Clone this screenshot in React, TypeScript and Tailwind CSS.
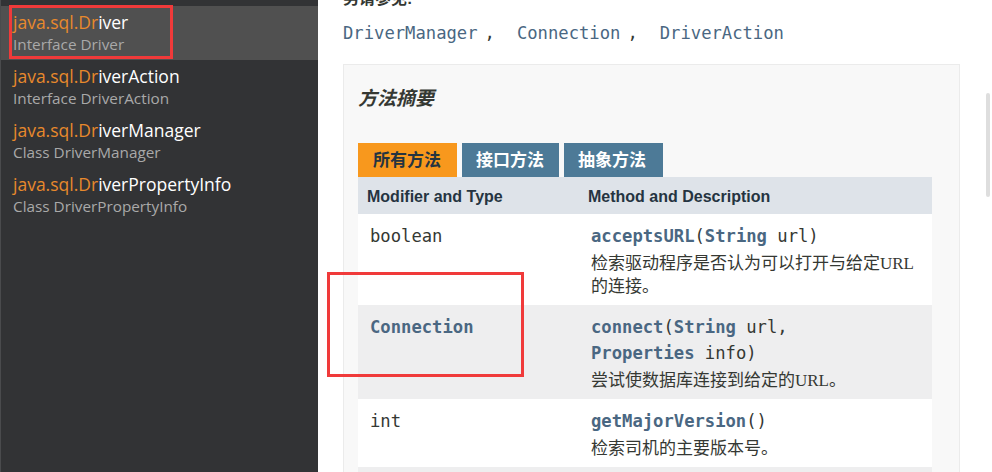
import React from 'react';

interface NavItem {
  name: string;
  kind: string;
  selected?: boolean;
}

const items: NavItem[] = [
  { name: 'Driver', kind: 'Interface Driver', selected: true },
  { name: 'DriverAction', kind: 'Interface DriverAction' },
  { name: 'DriverManager', kind: 'Class DriverManager' },
  { name: 'DriverPropertyInfo', kind: 'Class DriverPropertyInfo' },
];

const mono = "font-['DejaVu_Sans_Mono','Liberation_Mono',monospace]";
const cjk = "font-['Liberation_Serif','Noto_Sans_CJK_SC',serif]";

function Sidebar() {
  return (
    <div className="relative w-[318px] h-[472px] shrink-0 bg-[#323335] border-l border-[#4a4b4d] pt-[6px] font-['Open_Sans','Noto_Sans',sans-serif]">
      {items.map((it) => (
        <div
          key={it.name}
          className={`h-[54px] pl-[12px] pt-[5px] ${it.selected ? 'bg-[#505050]' : ''}`}
        >
          <div className="text-[17.5px] leading-[22px] text-white">
            <span className="text-[#e8892c]">java.sql.Dr</span>
            {it.name.slice(2)}
          </div>
          <div className="text-[15.3px] leading-[22px] text-[#a9a9a9]">{it.kind}</div>
        </div>
      ))}
      <div className="absolute left-[8px] top-[5px] w-[164px] h-[54px] border-[3px] border-[#f03a3a]" />
    </div>
  );
}

function Row({ bg, type, typeLink, method, desc }: {
  bg: string;
  type: string;
  typeLink?: boolean;
  method: React.ReactNode;
  desc: React.ReactNode;
}) {
  return (
    <div className={`grid grid-cols-[221px_1fr] ${bg} pb-[7px]`}>
      <div className={`pl-[12px] pt-[9px] text-[17.2px] leading-[26px] ${mono} ${typeLink ? 'font-bold text-[#4a6782]' : 'text-[#353833]'}`}>
        {type}
      </div>
      <div className="pl-[12px] pt-[9px]">
        <div className={`text-[17.2px] leading-[26px] ${mono} text-[#353833]`}>{method}</div>
        <div className={`mt-[3px] text-[17px] leading-[23px] ${cjk} text-[#353833]`}>{desc}</div>
      </div>
    </div>
  );
}

const L = ({ children }: { children: React.ReactNode }) => (
  <span className="font-bold text-[#4a6782]">{children}</span>
);

export default function App() {
  return (
    <div className="relative flex w-[992px] h-[472px] overflow-hidden bg-white">
      <Sidebar />
      <div className="flex-1 pl-[25px] text-[#353833]">
        <div className="-mt-[11px] leading-[20px] text-[16px] font-bold font-['Liberation_Sans','Noto_Sans_CJK_SC',sans-serif]">另请参见:</div>
        <div className={`mt-[12px] text-[17.2px] leading-[24px] ${mono} text-[#4a6782] whitespace-nowrap`}>
          DriverManager<span className="ml-[7px] mr-[22px] text-[#353833]">,</span>
          Connection<span className="ml-[7px] mr-[22px] text-[#353833]">,</span>
          DriverAction
        </div>
        <div className="mt-[19px] w-[617px] h-[420px] border border-[#ebebeb] bg-[#f8f8f8] pt-[22px] pl-[14px]">
          <div className="text-[19px] leading-[24px] italic font-bold font-['Liberation_Sans','Noto_Sans_CJK_SC',sans-serif] text-[#353833]">
            方法摘要
          </div>
          <div className="mt-[32px] flex gap-[5px] font-['Liberation_Sans','Noto_Sans_CJK_SC',sans-serif] text-[17px] font-bold">
            <div className="w-[99px] h-[34px] pl-[15px] leading-[36px] bg-[#f8981d] text-[#253441]">所有方法</div>
            <div className="w-[97px] h-[34px] pl-[14px] leading-[36px] bg-[#4d7a97] text-white">接口方法</div>
            <div className="w-[99px] h-[34px] pl-[14px] leading-[36px] bg-[#4d7a97] text-white">抽象方法</div>
          </div>
          <div className="w-[574px]">
            <div className="grid grid-cols-[221px_1fr] h-[37px] items-center pt-[2px] bg-[#dee3e9] text-[16px] font-bold text-[#253441] font-['Liberation_Sans',sans-serif]">
              <div className="pl-[9px]">Modifier and Type</div>
              <div className="pl-[9px]">Method and Description</div>
            </div>
            <Row
              bg="bg-white"
              type="boolean"
              method={<><L>acceptsURL</L>(<L>String</L> url)</>}
              desc={<>检索驱动程序是否认为可以打开与给定URL<br />的连接。</>}
            />
            <Row
              bg="bg-[#eeeeef]"
              type="Connection"
              typeLink
              method={<><L>connect</L>(<L>String</L> url,<br /><L>Properties</L> info)</>}
              desc={<>尝试使数据库连接到给定的URL。</>}
            />
            <Row
              bg="bg-white"
              type="int"
              method={<><L>getMajorVersion</L>()</>}
              desc={<>检索司机的主要版本号。</>}
            />
            <div className="h-[40px] bg-[#eeeeef]" />
          </div>
        </div>
      </div>
      <div className="absolute left-[327px] top-[272px] w-[197px] h-[105px] border-[3px] border-[#f03a3a]" />
      <div className="absolute right-[2px] top-[93px] w-[4px] h-[104px] rounded-full bg-[#dedede]" />
    </div>
  );
}
